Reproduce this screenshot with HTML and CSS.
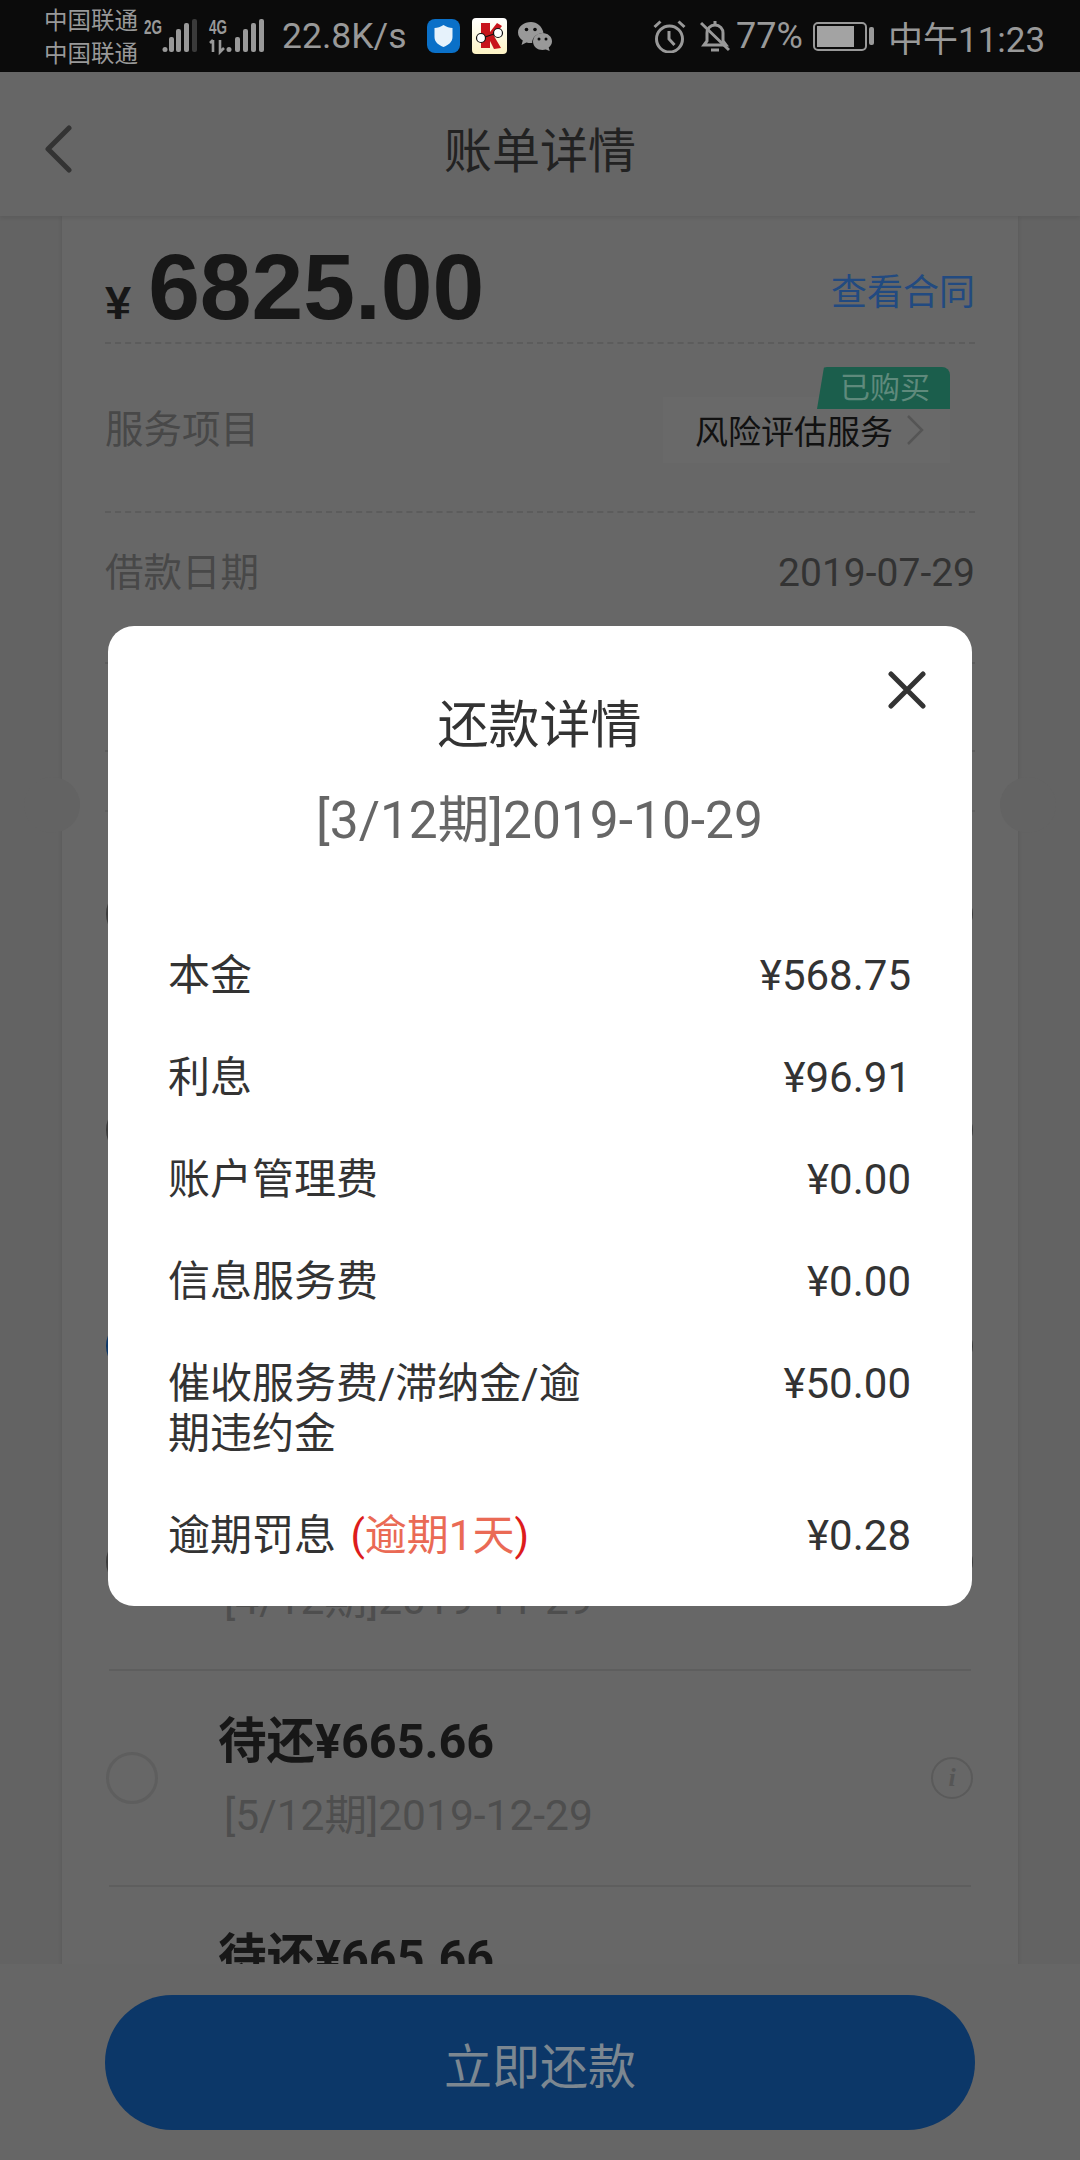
FILE: index.html
```html
<!DOCTYPE html>
<html lang="zh">
<head>
    <meta charset="utf-8">
    <title>账单详情</title>
    <link rel="stylesheet" href="styles.css">
</head>
<body>
<div class="screen">
    <div class="status">
        <div class="carrier"><span>中国联通</span><span>中国联通</span></div>
        <svg class="signal" width="56" height="36" viewBox="0 0 56 36">
            <text class="net" x="0" y="15" textLength="18" lengthAdjust="spacingAndGlyphs">2G</text>
            <circle cx="21" cy="30.500" r="2.500" fill="#999"/>
            <rect x="25" y="18" width="5" height="15" rx="2" fill="#999"/>
            <rect x="32" y="10" width="5" height="23" rx="2" fill="#999"/>
            <rect x="40" y="4" width="5" height="29" rx="2" fill="#999"/>
            <rect x="48" y="0" width="5" height="33" rx="2" fill="#3a3a3a"/>
        </svg>
        <svg class="signal2" width="56" height="36" viewBox="0 0 56 36">
            <text class="net" x="0" y="15" textLength="18" lengthAdjust="spacingAndGlyphs">4G</text>
            <path d="M4 21v12M1 24l3-3M11 21v12l4-4" stroke="#999" stroke-width="2.600" fill="none"/>
            <circle cx="20" cy="30.500" r="2.500" fill="#999"/>
            <rect x="26" y="18" width="5" height="15" rx="2" fill="#999"/>
            <rect x="34" y="10" width="5" height="23" rx="2" fill="#999"/>
            <rect x="42" y="4" width="5" height="29" rx="2" fill="#999"/>
            <rect x="50" y="0" width="5" height="33" rx="2" fill="#999"/>
        </svg>
        <span class="speed">22.8K/s</span>
        <svg class="app-shield" width="33" height="34" viewBox="0 0 33 34">
            <rect width="33" height="34" rx="8" fill="#0a70c8"/>
            <path d="M16.500 6c3 2 6 3 9 3v9c0 5-4 8-9 10-5-2-9-5-9-10V9c3 0 6-1 9-3z" fill="#e6f2fb"/>
        </svg>
        <svg class="app-k" width="35" height="36" viewBox="0 0 35 36">
            <defs>
                <linearGradient id="cream" x1="0" y1="0" x2="0" y2="1">
                    <stop offset="0" stop-color="#fff"/>
                    <stop offset="1" stop-color="#fdf3c4"/>
                </linearGradient>
            </defs>
            <rect width="35" height="36" rx="4" fill="url(#cream)"/>
            <path d="M9 5h9v9l7-9 5 3-8 10 7 12-7 1-4-8v7H9z" fill="#c8141c"/>
            <circle cx="9" cy="20" r="4.500" fill="#fff" stroke="#111" stroke-width="1.200"/>
            <circle cx="26" cy="15" r="4.500" fill="#fff" stroke="#111" stroke-width="1.200"/>
            <path d="M13 19l9-3" stroke="#111" stroke-width="1.200"/>
        </svg>
        <svg class="app-chat" width="34" height="29" viewBox="0 0 34 29">
            <path d="M13 0C6 0 0 4.500 0 10.500c0 3.400 1.900 6.200 4.800 8.100L3.500 23l4.900-2.600c1.500.4 3 .6 4.600.6l1.200-.1C13.900 16 18 11.500 25.500 10.700 24.200 4.500 19 0 13 0z" fill="#999"/>
            <path d="M34 19.500C34 14.500 29.500 11 24.500 11S15 14.500 15 19.500 19.500 28 24.500 28c1.200 0 2.300-.2 3.300-.5l3.900 1.500-1-3.500c2-1.500 3.300-3.700 3.300-6z" fill="#999"/>
            <circle cx="8.500" cy="7.500" r="1.800" fill="#0b0b0b"/>
            <circle cx="17" cy="7.500" r="1.800" fill="#0b0b0b"/>
            <circle cx="21" cy="17" r="1.500" fill="#0b0b0b"/>
            <circle cx="28" cy="17" r="1.500" fill="#0b0b0b"/>
        </svg>
        <svg class="alarm" width="33" height="33" viewBox="0 0 33 33" fill="none" stroke="#999" stroke-width="3">
            <circle cx="16.500" cy="19" r="13"/>
            <path d="M16 11v8l5.500 6M1.500 7l6-5.500M31.500 7l-6-5.500"/>
        </svg>
        <svg class="bell" width="30" height="33" viewBox="0 0 30 33" fill="none" stroke="#999" stroke-width="3">
            <path d="M4 25h22l-3-4V13c0-4-3-8-8-8s-8 4-8 8v8z"/>
            <path d="M11 30h8M15 1v4M1 3l28 27"/>
        </svg>
        <span class="battery-pct">77%</span>
        <div class="battery"><div class="battery-fill"></div></div>
        <div class="battery-nub"></div>
        <span class="clock">中午11:23</span>
    </div>

    <div class="nav">
        <svg class="back" width="28" height="48" viewBox="0 0 28 48" fill="none">
            <path d="M25 3L4 24l21 21" stroke="#333" stroke-width="5" stroke-linecap="round" stroke-linejoin="round"/>
        </svg>
        <h1 class="nav-title">账单详情</h1>
    </div>

    <div class="card">
        <div class="summary">
            <div class="amount"><span class="amount-sign">¥</span><span class="amount-num">6825.00</span></div>
            <a class="contract">查看合同</a>
        </div>
        <div class="line service-row">
            <span class="line-label">服务项目</span>
            <div class="service">
                <span class="bought">已购买</span>
                <span class="service-name">风险评估服务</span>
                <svg class="service-arrow" width="18" height="32" viewBox="0 0 18 32" fill="none">
                    <path d="M2 2l14 14L2 30" stroke="#555" stroke-width="2.500"/>
                </svg>
            </div>
        </div>
        <div class="line date-row">
            <span class="line-label">借款日期</span>
            <span class="line-value">2019-07-29</span>
        </div>
        <div class="line spacer-row"></div>
        <div class="tear"></div>

        <div class="bill"><span class="radio radio-paid"></span><div class="bill-text"></div><span class="info info-paid">i</span></div>
        <div class="bill"><span class="radio radio-paid"></span><div class="bill-text"></div><span class="info info-paid">i</span></div>
        <div class="bill"><span class="radio radio-on"></span><div class="bill-text"></div><span class="info info-paid">i</span></div>
        <div class="bill"><span class="radio radio-paid"></span><div class="bill-text"><b></b><span>[4/12期]2019-11-29</span></div><span class="info info-paid">i</span></div>
        <div class="bill"><span class="radio"></span><div class="bill-text"><b>待还¥665.66</b><span>[5/12期]2019-12-29</span></div><span class="info">i</span></div>
        <div class="bill"><span class="radio"></span><div class="bill-text"><b>待还¥665.66</b><span>[6/12期]2020-01-29</span></div><span class="info">i</span></div>
    </div>

    <div class="notch notch-left"></div>
    <div class="notch notch-right"></div>

    <div class="paybar"><button class="pay">立即还款</button></div>

    <div class="modal">
        <svg class="close" width="38" height="38" viewBox="0 0 38 38">
            <path d="M3 3l32 32M35 3L3 35" stroke="#333" stroke-width="5" stroke-linecap="round"/>
        </svg>
        <h2 class="modal-title">还款详情</h2>
        <p class="modal-sub">[3/12期]2019-10-29</p>
        <div class="fee"><span class="fee-name">本金</span><span>¥568.75</span></div>
        <div class="fee"><span class="fee-name">利息</span><span>¥96.91</span></div>
        <div class="fee"><span class="fee-name">账户管理费</span><span>¥0.00</span></div>
        <div class="fee"><span class="fee-name">信息服务费</span><span>¥0.00</span></div>
        <div class="fee"><span class="fee-name">催收服务费/滞纳金/逾期违约金</span><span>¥50.00</span></div>
        <div class="fee"><span class="fee-name fee-wide">逾期罚息 <em class="late"><i>(</i>逾期1天<i>)</i></em></span><span>¥0.28</span></div>
    </div>
</div>
</body>
</html>
```
FILE: styles.css
```css
* {
    margin: 0;
    padding: 0;
    box-sizing: border-box;
}
body {
    background: #636363;
    font-family: Roboto, "Noto Sans CJK SC", sans-serif;
}
.screen {
    position: relative;
    width: 1080px;
    height: 2160px;
    overflow: hidden;
    background: #636363;
}

/* status bar */
.status {
    display: flex;
    align-items: center;
    height: 72px;
    background: #0b0b0b;
    color: #999;
    padding-left: 44px;
}
.carrier {
    display: flex;
    flex-direction: column;
    width: 100px;
    margin-top: 3px;
    font-size: 23.500px;
    line-height: 33px;
}
.net {
    font-family: "Liberation Sans", sans-serif;
    font-size: 20px;
    font-weight: 700;
    fill: #999;
}
.signal {
    margin-top: 2px;
    overflow: visible;
}
.signal2 {
    margin-left: 9px;
    margin-top: 2px;
    overflow: visible;
}
.speed {
    margin-left: 17px;
    width: 145px;
    font-size: 35.500px;
}
.app-k {
    margin-left: 12px;
}
.app-chat {
    margin-left: 11px;
}
.alarm {
    margin-left: 101px;
}
.bell {
    margin-left: 14px;
}
.battery-pct {
    margin-left: 6px;
    width: 77px;
    font-size: 36px;
}
.battery {
    width: 54px;
    height: 29px;
    border: 2px solid #999;
    border-radius: 5px;
    padding: 2px;
}
.battery-fill {
    width: 37px;
    height: 100%;
    background: #a3a3a3;
}
.battery-nub {
    width: 5px;
    height: 18px;
    margin-left: 2px;
    background: #999;
    border-radius: 2px;
}
.clock {
    margin-left: 14px;
    font-size: 35px;
    white-space: nowrap;
}

/* title bar */
.nav {
    position: relative;
    z-index: 2;
    display: flex;
    align-items: center;
    justify-content: center;
    height: 144px;
    background: #666;
    box-shadow: 0 2px 4px rgba(0, 0, 0, .08);
}
.back {
    position: absolute;
    left: 44px;
    top: 53px;
}
.nav-title {
    font-size: 48px;
    font-weight: 400;
    color: #222;
    margin-top: 6px;
}

/* bill card */
.card {
    margin: 0 62px;
    background: #676767;
    box-shadow: 0 0 4px rgba(0, 0, 0, .12);
    padding: 0 43px;
    height: 1800px;
}
.summary {
    display: flex;
    align-items: center;
    justify-content: space-between;
    height: 128px;
    border-bottom: 2px dashed #5c5c5c;
}
.amount {
    display: flex;
    align-items: baseline;
    font-family: "Liberation Sans", sans-serif;
    font-weight: 700;
    color: #171717;
    margin-top: 16px;
}
.amount-sign {
    font-size: 47px;
    margin-right: 17px;
}
.amount-num {
    font-size: 93px;
    line-height: 120px;
}
.contract {
    font-size: 36px;
    color: #224a80;
    margin-top: 20px;
}
.line {
    display: flex;
    justify-content: space-between;
    border-bottom: 2px dashed #5c5c5c;
}
.line-label {
    font-size: 38.500px;
    line-height: 50px;
    color: #484848;
}
.line-value {
    font-size: 39px;
    line-height: 50px;
    color: #333;
}
.service-row {
    height: 169px;
    align-items: center;
}
.service-row .line-label {
    margin-top: 5px;
}
.service {
    position: relative;
    display: flex;
    align-items: center;
    width: 287px;
    height: 66px;
    margin-right: 25px;
    margin-top: 5px;
    padding-left: 32px;
    background: #696969;
}
.bought {
    position: absolute;
    right: 0;
    top: -30px;
    width: 133px;
    height: 42px;
    padding-left: 23px;
    background: #1b5e4c;
    border-radius: 10px 8px 0 0;
    clip-path: polygon(7px 0, 100% 0, 100% 100%, 0 100%);
    color: #5f8a7c;
    font-size: 30px;
    line-height: 42px;
}
.service-name {
    font-size: 33px;
    color: #111;
}
.service-arrow {
    margin-left: 13px;
}
.date-row {
    height: 151px;
    padding-top: 35px;
    align-items: flex-start;
}
.spacer-row {
    height: 88px;
}
.tear {
    height: 60px;
    margin-bottom: -5px;
    border-bottom: 2px dashed #5f5f5f;
}

/* instalment list */
.bill {
    display: flex;
    align-items: center;
    height: 216px;
    margin: 0 4px;
    border-bottom: 2px solid #5e5e5e;
}
.radio {
    flex: none;
    width: 52px;
    height: 52px;
    margin-left: -3px;
    border: 3px solid #5e5e5e;
    border-radius: 50%;
}
.radio-paid {
    border-color: #3c3c3c;
}
.radio-on {
    background: #0c3768;
    border-color: #0c3768;
}
.bill-text {
    display: flex;
    flex-direction: column;
    flex: 1;
    margin-left: 60px;
    margin-top: -4px;
}
.bill-text b {
    min-height: 62px;
    font-size: 48.500px;
    line-height: 62px;
    color: #171717;
}
.bill-text span {
    font-size: 42.500px;
    line-height: 50px;
    margin-top: 18px;
    margin-left: 6px;
    color: #4e4e4e;
}
.info {
    flex: none;
    width: 42px;
    height: 42px;
    margin-right: -2px;
    border: 2px solid #5a5a5a;
    border-radius: 50%;
    text-align: center;
    font: italic 700 26px/38px "Liberation Serif", serif;
    color: #555;
}
.info-paid {
    border-color: #3c3c3c;
}

/* ticket cut-outs, sit on the card edge */
.notch {
    position: absolute;
    top: 777px;
    width: 56px;
    height: 56px;
    border-radius: 50%;
    background: #636363;
}
.notch-left {
    left: 24px;
}
.notch-right {
    right: 24px;
}

/* fixed pay button */
.paybar {
    position: absolute;
    left: 0;
    right: 0;
    bottom: 0;
    height: 196px;
    background: #666;
    padding: 31px 105px 0;
}
.pay {
    display: block;
    width: 100%;
    height: 135px;
    border: 0;
    border-radius: 68px;
    background: #0c3768;
    color: #7c8791;
    font-family: Roboto, "Noto Sans CJK SC", sans-serif;
    font-size: 48px;
}

/* repayment dialog */
.modal {
    position: absolute;
    left: 108px;
    top: 626px;
    width: 864px;
    height: 980px;
    padding: 0 61px 0 60px;
    background: #fff;
    border-radius: 26px;
    color: #333;
}
.close {
    position: absolute;
    right: 46px;
    top: 45px;
}
.modal-title {
    margin-top: 69px;
    text-align: center;
    font-size: 51px;
    line-height: 62px;
    font-weight: 400;
}
.modal-sub {
    margin-top: 33px;
    margin-bottom: 99px;
    text-align: center;
    font-size: 51.500px;
    line-height: 62px;
    color: #666;
}
.fee {
    display: flex;
    justify-content: space-between;
    font-size: 42px;
    line-height: 50px;
    padding-bottom: 52px;
}
.fee-name {
    width: 415px;
}
.fee-wide {
    width: auto;
}
.late {
    margin-left: 4px;
    font-style: normal;
    color: #ea6a55;
}
.late i {
    font-style: normal;
    color: #dd1c1c;
}
```
